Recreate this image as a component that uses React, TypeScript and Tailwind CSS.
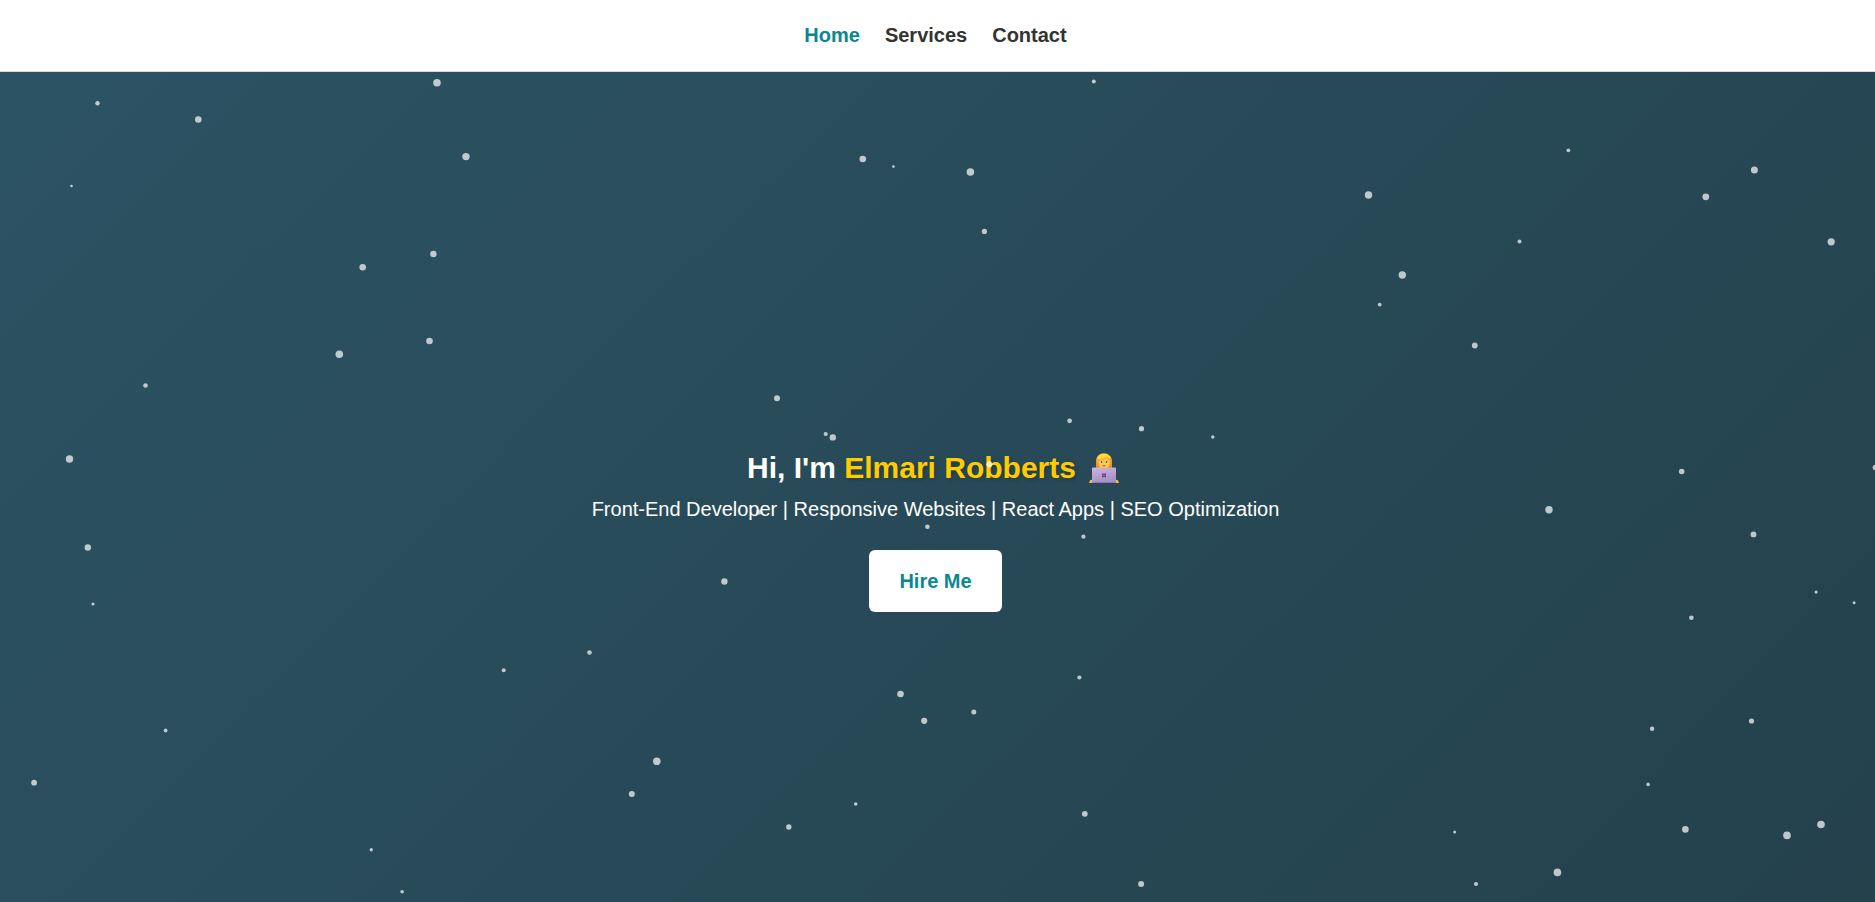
type Star = [x: number, y: number, r: number];

const STARS: Star[] = [
  [97.5, 103.3, 2.2], [198.3, 119.5, 3.3], [437, 82.8, 3.8], [466, 156.6, 3.7],
  [71.5, 186, 1.3], [362.7, 267.3, 3.3], [433.4, 254, 3.2], [429.5, 341, 3.3],
  [339.3, 354.2, 3.8], [145.5, 385.5, 2.3], [69.5, 459, 3.7],
  [862.8, 159, 3.3], [893.4, 166.6, 1.4], [777, 398.3, 3], [825.7, 434, 2.1],
  [832.8, 437.4, 3.2], [1093.8, 81.4, 2], [970.4, 172, 3.8], [984.4, 231.4, 2.6],
  [1368.5, 195, 3.7], [1402.3, 275, 3.7], [1379.7, 304.6, 1.9],
  [1069.6, 420.8, 2.4], [1141.5, 428.7, 2.6], [1212.8, 437, 1.7], [989.3, 464.3, 3],
  [1568.4, 150.3, 1.9], [1754.4, 170, 3.5], [1705.8, 196.8, 3.4],
  [1831.2, 241.8, 3.6], [1519.5, 241.4, 2], [1474.8, 345.5, 2.9],
  [1681.7, 471.5, 2.8], [1875.3, 467.5, 2.7], [87.8, 547.5, 3.2], [93, 604, 1.6],
  [165.6, 730.5, 1.9], [34.1, 782.7, 2.9], [371.3, 849.8, 1.7],
  [402.1, 891.8, 1.8], [758.8, 512, 2.6], [927.4, 526.8, 2.3], [724.4, 581.5, 3.2],
  [589.5, 652.5, 2.3], [503.7, 670.3, 2], [900.5, 694, 3.3], [924.2, 720.8, 3.1],
  [656.8, 761.3, 3.8], [631.8, 794, 3], [855.7, 804, 1.8], [788.8, 827, 2.7],
  [1083.4, 536.7, 2.1], [1079.4, 677.5, 2.1], [973.8, 712, 2.5],
  [1084.8, 813.8, 2.9], [1141.1, 884, 3], [1549, 509.8, 3.7], [1753.5, 534.4, 2.9],
  [1816.1, 592.1, 1.6], [1854.1, 602.7, 1.5], [1691.4, 617.7, 2.3],
  [1652.1, 728.8, 2.2], [1751.5, 721, 2.6], [1648.1, 784.4, 1.8],
  [1454.7, 832, 1.5], [1685.4, 829.4, 3.3], [1787, 835.4, 3.8],
  [1821, 824.5, 3.8], [1557.4, 872.4, 3.8], [1476, 884, 2.1],
];

const LINKS = [
  { label: "Home", href: "#home", active: true },
  { label: "Services", href: "#services", active: false },
  { label: "Contact", href: "#contact", active: false },
];

function Starfield() {
  return (
    <svg
      className="pointer-events-none absolute inset-0 h-full w-full"
      viewBox="0 72 1875 830"
      preserveAspectRatio="xMidYMid slice"
      aria-hidden="true"
    >
      {STARS.map(([x, y, r]) => (
        <circle key={`${x}-${y}`} cx={x} cy={y} r={r} fill="#fff" fillOpacity="0.7" />
      ))}
    </svg>
  );
}

function TechnologistIcon() {
  return (
    <svg className="h-8 w-10" viewBox="0 0 32 32" role="img" aria-label="Woman technologist">
      <defs>
        <linearGradient id="hair" x1="0" y1="0" x2="0" y2="1">
          <stop offset="0" stopColor="#ffc62a" />
          <stop offset="0.5" stopColor="#f7a424" />
          <stop offset="1" stopColor="#ee8420" />
        </linearGradient>
        <linearGradient id="lid" x1="0" y1="0" x2="0.3" y2="1">
          <stop offset="0" stopColor="#cbb4e2" />
          <stop offset="1" stopColor="#a98fc4" />
        </linearGradient>
      </defs>
      <path d="M8 16V9.500C8 4.500 11 1.500 15.500 1.200C20.500 .8 24 4.500 24 9.500V16Z" fill="url(#hair)" />
      <path d="M10.500 9C13 8.800 17 7.500 18.500 5.500C19.500 7.500 21 8.500 21.800 9V12C21.800 15 19 17 16 17S10.500 15 10.500 12Z" fill="#ffc83d" />
      <path d="M9 7.500C10 3.500 13 1.700 17.500 2C20 2.300 22 4 23 6.500C21.500 6 20 5 18.500 4.500C15.500 6.300 12 7.500 9 7.500Z" fill="#ffdb3d" />
      <ellipse cx="13.200" cy="10" rx="1.500" ry="1.200" fill="#f5f0ea" />
      <ellipse cx="18.800" cy="10" rx="1.500" ry="1.200" fill="#f5f0ea" />
      <circle cx="13.500" cy="10" r=".9" fill="#44445e" />
      <circle cx="18.600" cy="10" r=".9" fill="#44445e" />
      <path d="M14.200 13.500Q16 12.800 17.800 13.500Q16 15.300 14.200 13.500Z" fill="#d43c4b" />
      <path d="M1 31L2 28.500Q3 27.500 5 28V31ZM31 31L30 28.500Q29 27.500 27 28V31Z" fill="#ffc21f" />
      <path d="M5 15.500H27Q28 15.500 28 16.500V31H4V16.500Q4 15.500 5 15.500Z" fill="url(#lid)" />
      <path d="M4 30H28V31H4Z" fill="#8f78aa" />
      <path d="M14 21.500H15.800V23.200H14ZM16.200 21.500H18V23.200H16.200ZM14 23.600H15.800V25.300H14ZM16.200 23.600H18V25.300H16.200Z" fill="#5d427f" />
    </svg>
  );
}

export default function App() {
  return (
    <div className="flex min-h-screen flex-col font-['Liberation_Sans',Arial,sans-serif] text-xl leading-[23px]">
      <header className="border-b border-[#d5dde0] bg-white py-6">
        <nav className="flex flex-wrap justify-center gap-x-[25px] gap-y-2 pr-1 font-bold">
          {LINKS.map(({ label, href, active }) => (
            <a key={label} href={href} className={active ? "text-[#0b8793]" : "text-[#333333]"}>
              {label}
            </a>
          ))}
        </nav>
      </header>
      <main className="relative flex flex-1 flex-col items-center justify-center overflow-hidden bg-linear-135 from-[#2c5364] to-[#24414c] pt-24 pr-5 pb-2 pl-4 text-center text-white">
        <h1 className="flex flex-wrap items-center justify-center gap-x-2 text-[30px] leading-9 font-bold">
          <span>
            Hi, I'm{" "}
            <span className="text-[#ffcc00] [text-shadow:2px_2px_4px_rgba(0,0,0,0.2)]">
              Elmari Robberts
            </span>
          </span>
          <TechnologistIcon />
        </h1>
        <p className="mt-3">
          Front-End Developer | Responsive Websites | React Apps | SEO Optimization
        </p>
        <Starfield />
        <a
          href="#contact"
          className="relative mt-[29px] rounded-md bg-white px-[30px] py-5 leading-[22px] font-bold text-[#0b8793]"
        >
          Hire Me
        </a>
      </main>
    </div>
  );
}
